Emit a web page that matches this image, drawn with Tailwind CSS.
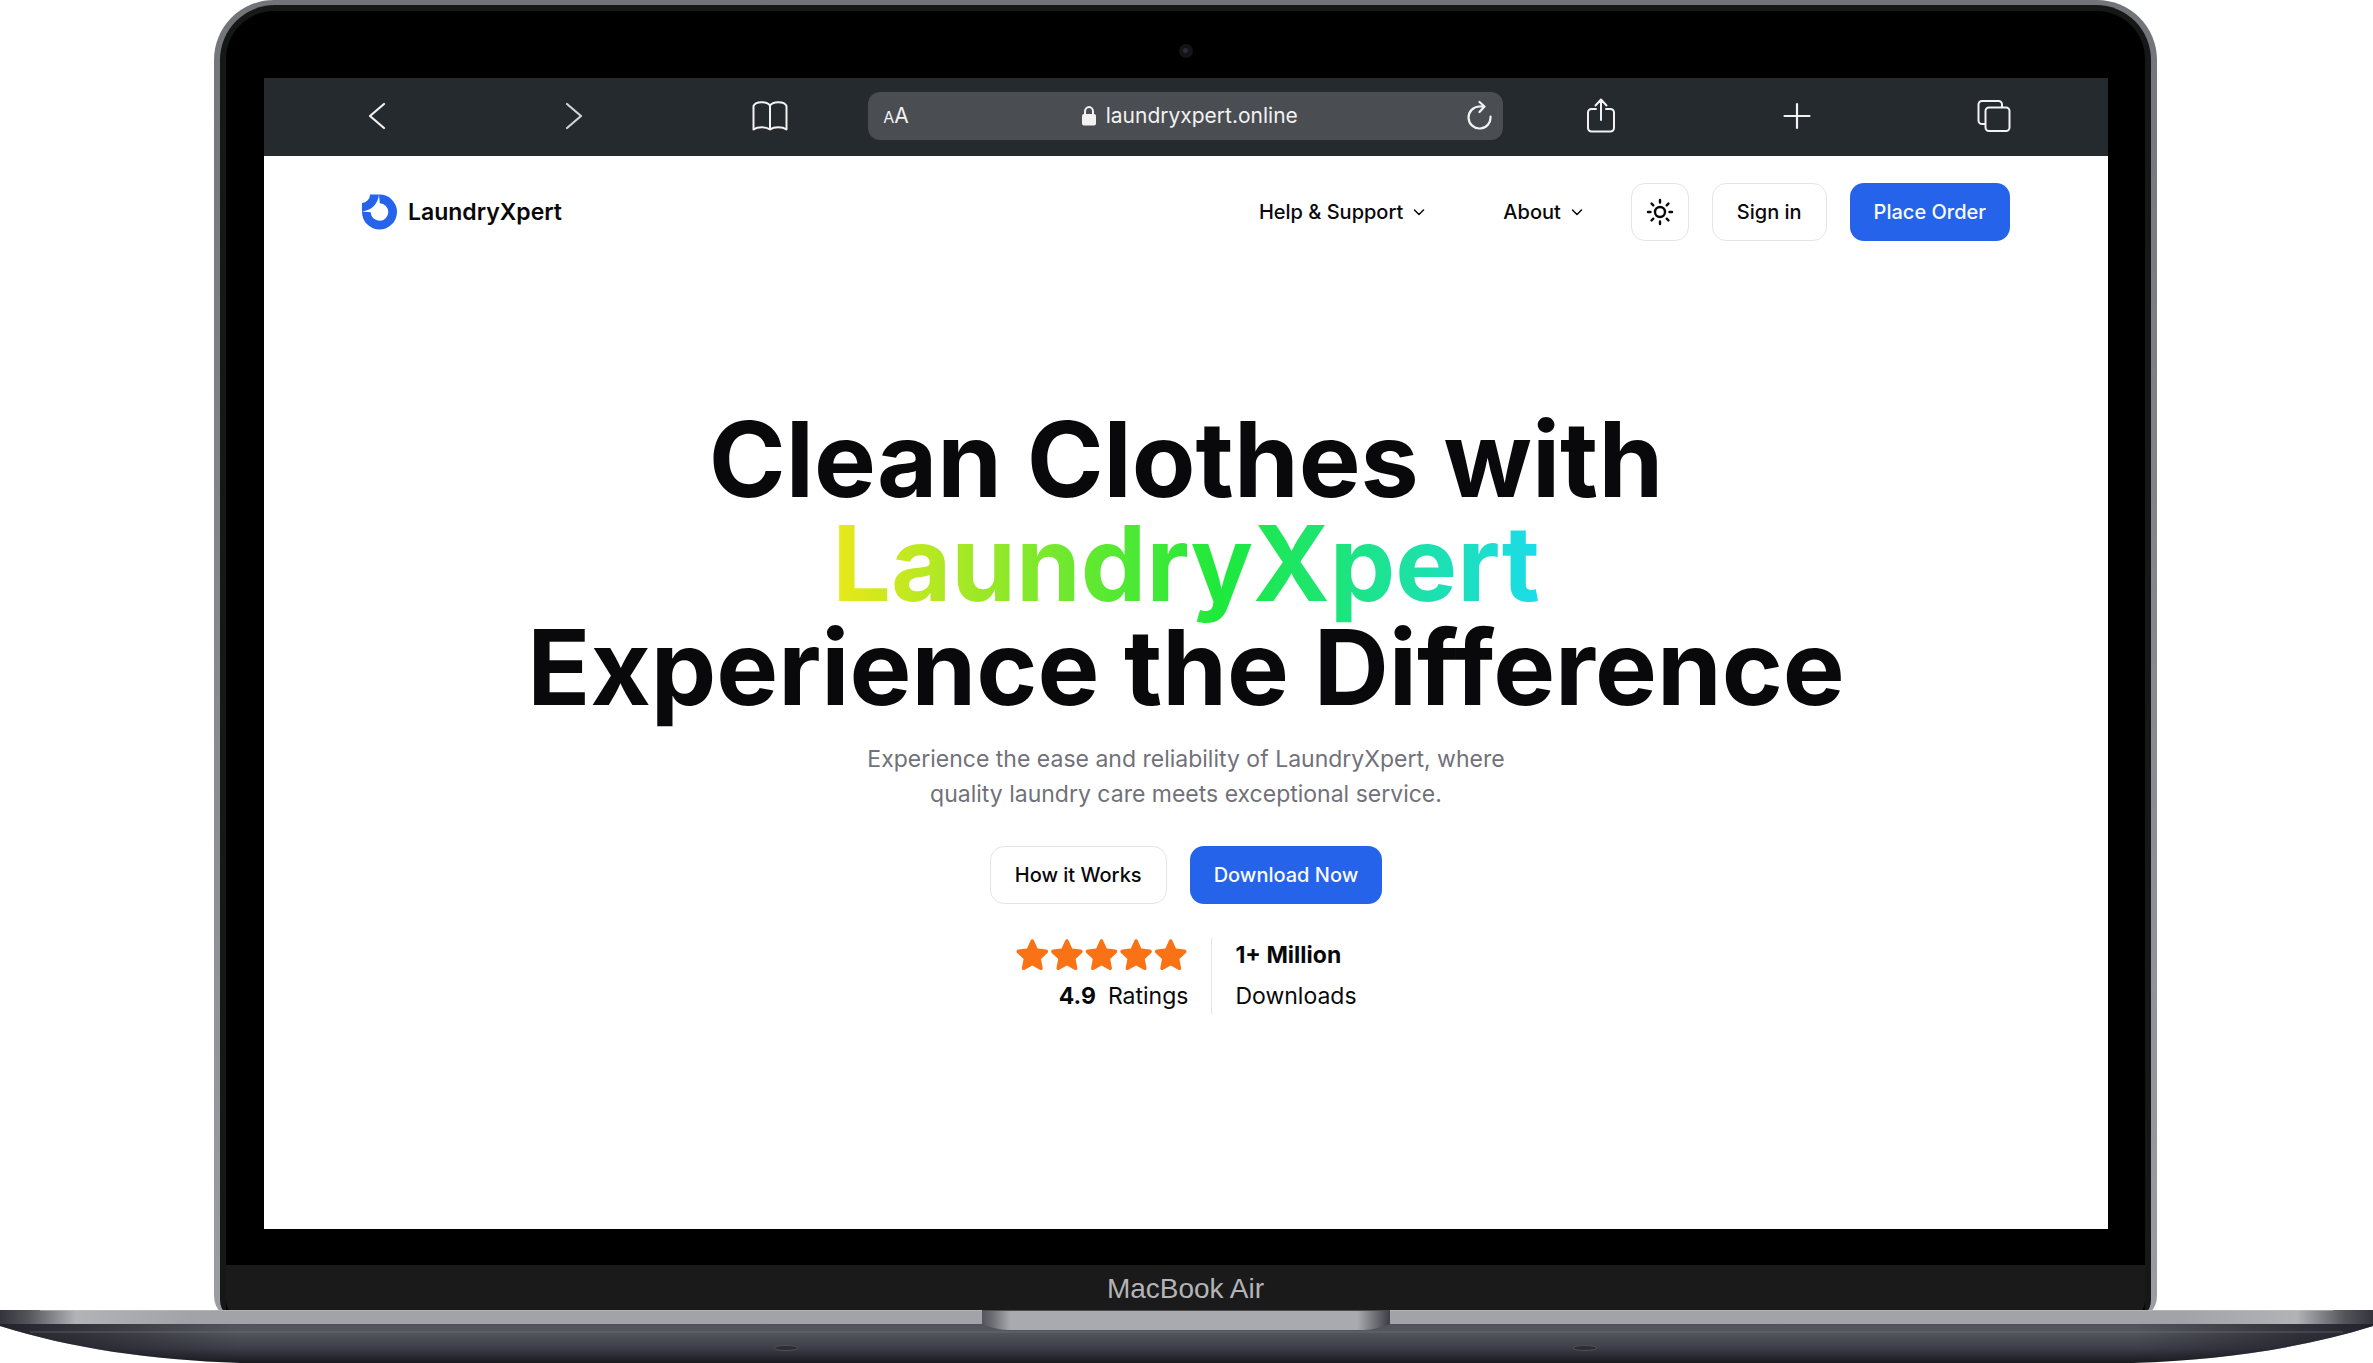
<!DOCTYPE html>
<html lang="en">
<head>
<meta charset="utf-8">
<meta name="viewport" content="width=device-width, initial-scale=1">
<title>LaundryXpert</title>
<script src="https://cdn.jsdelivr.net/npm/@tailwindcss/browser@4"></script>
</head>
<body class="bg-white font-['Inter',sans-serif] text-[#09090b]">
<div class="flex min-h-screen flex-col overflow-hidden">

  <!-- Laptop lid -->
  <div class="flex flex-1 flex-col pl-[214px] pr-[216px]">
    <div class="-mb-[10px] flex flex-1 flex-col rounded-t-[60px] rounded-b-[24px] bg-linear-to-b from-[#737479] to-[#9c9da3] px-[6px] pt-[5px]">
      <div class="flex flex-1 flex-col rounded-t-[55px] rounded-b-[20px] bg-[#161717] px-[6px] pt-[6px]">
        <div class="flex flex-1 flex-col rounded-t-[48px] bg-black">

          <div class="flex h-[67px] items-center justify-center">
            <span class="mt-[12px] flex size-[14px] items-center justify-center rounded-full bg-[#141416]"><span class="size-[5px] rounded-full bg-[#2b2c38]"></span></span>
          </div>

          <!-- Display -->
          <div class="mr-[37px] mb-[36px] ml-[38px] flex-1 bg-white">

            <!-- Browser toolbar -->
            <div class="flex h-[78px] items-center bg-[#252a2e] pr-[16px] pb-[2px] pl-[15px] text-[#f2f2f2]">
              <button aria-label="Back" class="flex flex-1 justify-center"><svg class="size-[36px]" viewBox="0 0 36 36" fill="none" stroke="currentColor" stroke-width="2.2" stroke-linecap="round" stroke-linejoin="round"><path d="M25 6 11 18l14 12"/></svg></button>
              <button aria-label="Forward" class="flex flex-1 justify-center text-[#d4d4d4]"><svg class="size-[36px]" viewBox="0 0 36 36" fill="none" stroke="currentColor" stroke-width="2.2" stroke-linecap="round" stroke-linejoin="round"><path d="M11 6l14 12-14 12"/></svg></button>
              <button aria-label="Bookmarks" class="flex flex-1 justify-center"><svg class="size-[36px]" viewBox="0 0 36 36" fill="none" stroke="currentColor" stroke-width="2" stroke-linecap="round" stroke-linejoin="round"><path d="M18 7.500C15.500 3.500 4 2.500 1.500 8v23.500c4-3 12.500-3 16.500 0 4-3 12.500-3 16.500 0V8C32 2.500 20.500 3.500 18 7.500v24"/></svg></button>
              <div class="flex h-[48px] w-[35%] items-center rounded-[12px] bg-[#4a4d52] pr-[11px] pl-[15px]">
                <button aria-label="Text size" class="text-[21px] leading-[24px]"><span class="text-[16px]">A</span>A</button>
                <div class="flex flex-1 items-center justify-center gap-[10px] pl-[4px]">
                  <svg class="h-[20px] w-[14px]" viewBox="0 0 14 20"><rect y="8" width="14" height="11.500" rx="2" fill="currentColor"/><path d="M3 9V5.500a4 4.500 0 0 1 8 0V9" fill="none" stroke="currentColor" stroke-width="2"/></svg>
                  <input aria-label="Address" type="text" value="laundryxpert.online" class="field-sizing-content bg-transparent text-[21px] leading-[28px] outline-none">
                </div>
                <button aria-label="Reload"><svg class="h-[32px] w-[25px]" viewBox="0 0 25 32" fill="none" stroke="currentColor" stroke-width="2.200" stroke-linecap="round" stroke-linejoin="round"><path d="M23.500 16.500A11 11 0 1 1 12.500 6.500H17M12.500 2l5 4.500-5 5.500"/></svg></button>
              </div>
              <button aria-label="Share" class="flex flex-1 justify-center"><svg class="size-[36px]" viewBox="0 0 36 36" fill="none" stroke="currentColor" stroke-width="2" stroke-linecap="round" stroke-linejoin="round"><path d="M13 11H8.500a3.500 3.500 0 0 0-3.500 3.500V30a3.500 3.500 0 0 0 3.500 3.500h19A3.500 3.500 0 0 0 31 30V14.500a3.500 3.500 0 0 0-3.500-3.500H23M18 22V2M12.500 7.500 18 1.500l5.500 6"/></svg></button>
              <button aria-label="New tab" class="flex flex-1 justify-center"><svg class="size-[36px]" viewBox="0 0 36 36" fill="none" stroke="currentColor" stroke-width="2.200" stroke-linecap="round"><path d="M18 6v24M5.500 18h25"/></svg></button>
              <button aria-label="Tabs" class="flex flex-1 justify-center"><svg class="size-[36px]" viewBox="0 0 36 36" fill="none" stroke="currentColor" stroke-width="2" stroke-linejoin="round"><rect x="9.500" y="9.500" width="24" height="23.500" rx="3.500"/><path d="M9.500 26H6a3.500 3.500 0 0 1-3.500-3.500V6.500A3.500 3.500 0 0 1 6 3h16.500A3.500 3.500 0 0 1 26 6.500v3"/></svg></button>
            </div>

            <!-- Site header -->
            <header class="flex items-center px-[98px] pt-[27px] text-[20px] leading-[28px] font-medium">
              <a href="#" class="mr-auto flex items-center gap-[10px] text-[23px] font-semibold">
                <svg class="size-[36px]" viewBox="0 0 36 36"><path fill="#2563eb" d="M8 .500H17.500a17.500 17.500 0 1 1-17.500 17.500V9A8.500 8.500 0 0 0 8 .500Z"/><path fill="#fff" d="M17 .500 17.800 9.200A8.800 8.800 0 1 1 8.700 18.300L0 17.500C9.500 16.500 16 10 17 .500Z"/></svg>
                LaundryXpert
              </a>
              <nav class="flex items-center">
                <button class="mr-[78px] flex items-center gap-[10px]">Help &amp; Support
                  <svg class="size-[12px]" viewBox="0 0 12 12" fill="none" stroke="currentColor" stroke-width="1.500" stroke-linecap="round" stroke-linejoin="round"><path d="m1.500 4 4.500 4.500L10.500 4"/></svg></button>
                <button class="mr-[48px] flex items-center gap-[10px]">About
                  <svg class="size-[12px]" viewBox="0 0 12 12" fill="none" stroke="currentColor" stroke-width="1.500" stroke-linecap="round" stroke-linejoin="round"><path d="m1.500 4 4.500 4.500L10.500 4"/></svg></button>
              </nav>
              <div class="flex gap-[23px]">
                <button aria-label="Toggle theme" class="flex size-[58px] items-center justify-center rounded-[14px] border border-[#e4e4e7]"><svg class="size-[28px]" viewBox="0 0 28 28" fill="none" stroke="currentColor" stroke-width="2.400" stroke-linecap="round"><circle cx="14" cy="14" r="5"/><path d="M14 2v2.500M14 23.500V26M2 14h2.500M23.500 14H26M5.500 5.500l1.800 1.800M20.700 20.700l1.800 1.800M5.500 22.500l1.800-1.800M20.700 7.300l1.800-1.800"/></svg></button>
                <a href="#" class="flex h-[58px] items-center rounded-[14px] border border-[#e4e4e7] px-[24px]">Sign in</a>
                <a href="#" class="flex h-[58px] items-center rounded-[14px] bg-[#2563eb] px-[24px] text-[#f8fafc]">Place Order</a>
              </div>
            </header>

            <!-- Hero -->
            <main class="flex flex-col items-center pt-[166px] pb-[215px] text-center">
              <h1 class="text-[104px] leading-[104px] font-bold">Clean Clothes with<br><span class="bg-linear-to-r/srgb from-[#eae81a] via-[#1de93c] via-55% to-[#1cdcea] bg-clip-text text-transparent">LaundryXpert</span><br>Experience the Difference</h1>
              <p class="mt-[23px] text-[23px] leading-[35px] text-[#71717a]">Experience the ease and reliability of LaundryXpert, where<br>quality laundry care meets exceptional service.</p>
              <div class="mt-[34px] flex gap-[23px] text-[20px] leading-[28px] font-medium">
                <a href="#" class="flex h-[58px] items-center rounded-[14px] border border-[#e4e4e7] px-[24px]">How it Works</a>
                <a href="#" class="flex h-[58px] items-center rounded-[14px] bg-[#2563eb] px-[24px] text-[#f8fafc]">Download Now</a>
              </div>
              <div class="mt-[34px] flex text-[23px] leading-[35px]">
                <div class="flex flex-col items-end gap-[6px] pr-[23px]">
                  <div class="flex h-[35px] items-center" role="img" aria-label="5 stars">
                    <svg class="h-[35px] w-[173px] text-[#f97316]" viewBox="0 0 173 35" fill="currentColor"><defs><path id="star" d="M15.600 2.500c.6-1.700 2.800-1.700 3.400 0l3.600 8 8.700 1c1.800.3 2.400 2.300 1.100 3.500l-6.400 6 1.700 8.700c.4 1.800-1.300 3-2.800 2.100l-7.600-4.300-7.600 4.300c-1.500.9-3.200-.3-2.800-2.100l1.700-8.700-6.400-6c-1.300-1.200-.7-3.200 1.100-3.500l8.700-1z"/></defs><use href="#star"/><use href="#star" x="34.600"/><use href="#star" x="69.200"/><use href="#star" x="103.800"/><use href="#star" x="138.400"/></svg>
                  </div>
                  <div><b class="mr-[12px] font-bold">4.9</b>Ratings</div>
                </div>
                <div class="flex flex-col gap-[6px] border-l border-[#e4e4e7] pl-[23px] text-left">
                  <div class="font-bold">1+ Million</div>
                  <div>Downloads</div>
                </div>
              </div>
            </main>
          </div>

          <!-- Chin -->
          <div class="flex h-[55px] justify-center rounded-b-[20px] bg-[#1a1a1a] pt-[5px] font-['Liberation_Sans',sans-serif] text-[28px] leading-[38px] text-[#b4b4b8]">MacBook Air</div>
        </div>
      </div>
    </div>
  </div>

  <!-- Laptop base -->
  <svg class="relative block h-[53px] w-full" viewBox="0 0 2373 53" preserveAspectRatio="none">
    <defs>
      <linearGradient id="edge"><stop offset="0" stop-color="#33343c"/><stop offset=".012" stop-color="#54555b"/><stop offset=".032" stop-color="#b2b3b7"/><stop offset=".08" stop-color="#a2a3a8"/><stop offset=".92" stop-color="#a2a3a8"/><stop offset=".968" stop-color="#b2b3b7"/><stop offset=".988" stop-color="#54555b"/><stop offset="1" stop-color="#33343c"/></linearGradient>
      <linearGradient id="body" x2="0" y2="1"><stop offset="0" stop-color="#515259"/><stop offset=".2" stop-color="#55575e"/><stop offset=".6" stop-color="#3f404b"/><stop offset="1" stop-color="#191920"/></linearGradient>
      <linearGradient id="shade"><stop offset="0" stop-color="#15151f" stop-opacity=".8"/><stop offset=".1" stop-color="#15151f" stop-opacity="0"/><stop offset=".9" stop-color="#15151f" stop-opacity="0"/><stop offset="1" stop-color="#15151f" stop-opacity=".8"/></linearGradient>
      <linearGradient id="notch"><stop offset="0" stop-color="#55565d"/><stop offset=".025" stop-color="#6c6d73"/><stop offset=".07" stop-color="#a9aaaf"/><stop offset=".92" stop-color="#a9aaaf"/><stop offset=".97" stop-color="#66676d"/><stop offset="1" stop-color="#3c3d44"/></linearGradient>
    </defs>
    <path fill="url(#body)" d="M0 13v3c70 22 150 34 240 37h1893c90-3 170-15 240-37v-3z"/>
    <path fill="url(#shade)" d="M0 13v3c70 22 150 34 240 37h1893c90-3 170-15 240-37v-3z"/>
    <path d="M30 22h2313" stroke="#73757b" stroke-opacity=".6"/>
    <path fill="url(#edge)" d="M0 0h2373v14H0z"/>
    <path d="M40 .500h2293" stroke="#c4c4c8" stroke-opacity=".5"/>
    <path fill="#4b4c53" d="M982 0h408v15H982z"/>
    <path fill="url(#notch)" d="M982 1h408v13c-10 4-18 6-30 6h-348c-12 0-20-2-30-6z"/>
    <g fill="#2c2d37" stroke="#4f505a" stroke-width="1"><ellipse cx="786" cy="38" rx="12" ry="2.500"/><ellipse cx="1585" cy="38" rx="12" ry="2.500"/></g>
  </svg>
</div>
</body>
</html>
